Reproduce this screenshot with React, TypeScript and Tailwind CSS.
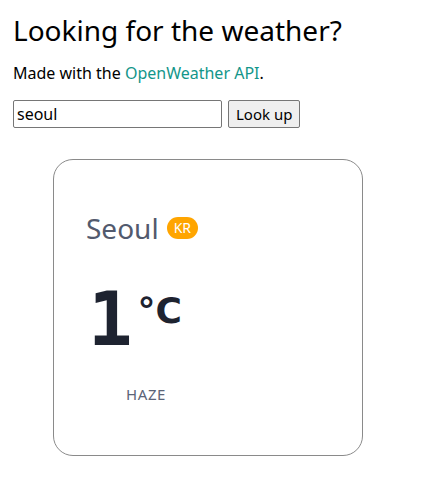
export default function App() {
  return (
    <div className="px-[13px] pt-[8px] text-black" style={{ fontFamily: '"Noto Sans", "Open Sans", sans-serif' }}>
      <h1 className="text-[28px] leading-[44px] font-normal">Looking for the weather?</h1>
      <p className="mt-[10px] text-[16px] leading-[22px]">
        Made with the <a className="text-[#13968a]" href="#">OpenWeather API</a>.
      </p>
      <form className="mt-[16px] flex items-center gap-[6px]" onSubmit={(e) => e.preventDefault()}>
        <input
          defaultValue="seoul"
          className="h-[28px] w-[209px] border border-[#767676] rounded-[2px] px-[3px] text-[16px] outline-none"
        />
        <button className="h-[28px] px-[7px] border border-[#767676] rounded-[2px] bg-[#efefef] text-[15px]">
          Look up
        </button>
      </form>
      <div className="mt-[31px] ml-[40px] w-[310px] h-[297px] border border-[#8a8a8a] rounded-[20px] px-[32px] pt-[50px]">
        <div className="flex items-center gap-[8px]">
          <span className="text-[28px] leading-[36px] text-[#525a6e]">Seoul</span>
          <span className="rounded-full bg-[#ffa500] text-white text-[14px] leading-[22px] px-[7px]">KR</span>
        </div>
        <div className="mt-[38px] ml-[2px] flex items-start text-[#1e2330] font-['DejaVu_Sans',sans-serif]">
          <span className="text-[74px] leading-[70px] font-bold font-['DejaVu_Sans_Mono',monospace]">1</span>
          <span className="text-[36px] leading-[34px] font-bold mt-[10px] ml-[5px]">°C</span>
        </div>
        <div className="mt-[29px] ml-[40px] text-[15px] tracking-[0.04em] text-[#5c6478]">HAZE</div>
      </div>
    </div>
  );
}
